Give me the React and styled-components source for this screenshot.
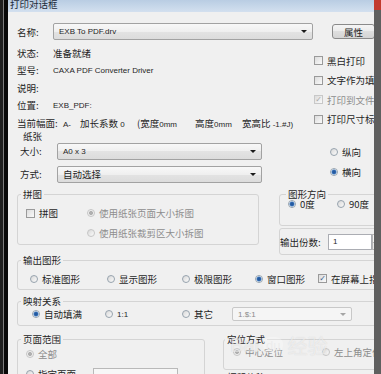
import React from 'react'
import styled, { createGlobalStyle } from 'styled-components'

const GlobalStyle = createGlobalStyle`
  html, body {
    margin: 0;
    padding: 0;
    background: #111;
  }
  body {
    font-family: "Noto Sans CJK SC", "Liberation Sans", sans-serif;
    font-size: 9.5px;
    color: #1f1f1f;
  }
`

function Radio({ checked, disabled, w, children }) {
  return (
    <Choice $w={w} $disabled={disabled}>
      <RadioDot $checked={checked} $disabled={disabled} />
      {children}
    </Choice>
  )
}

function Check({ checked, disabled, w, children }) {
  return (
    <Choice $w={w} $disabled={disabled}>
      <CheckBox $disabled={disabled}>{checked ? '✓' : ''}</CheckBox>
      {children}
    </Choice>
  )
}

function Combo({ w, h, disabled, latin, children }) {
  return (
    <ComboBox $w={w} $h={h} $disabled={disabled}>
      <Value $latin={latin}>{children}</Value>
      <Arrow $disabled={disabled} />
    </ComboBox>
  )
}

function App() {
  return (
    <>
      <GlobalStyle />
      <Screen>
        <LeftEdge />
        <Dialog>
          <TitleBar>打印对话框</TitleBar>
          <Body>
            <NameRow>
              <Label $w={36}>名称:</Label>
              <Combo w={260} latin>EXB To PDF.drv</Combo>
              <PushButton>属性</PushButton>
            </NameRow>

            <InfoArea>
              <InfoList>
                <InfoRow><Label $w={36}>状态:</Label>准备就绪</InfoRow>
                <InfoRow><Label $w={36}>型号:</Label><Value $latin>CAXA PDF Converter Driver</Value></InfoRow>
                <InfoRow><Label $w={36}>说明:</Label></InfoRow>
                <InfoRow><Label $w={36}>位置:</Label><Value $latin>EXB_PDF:</Value></InfoRow>
                <InfoRow>
                  <Label $w={46}>当前幅面:</Label>
                  <Label $w={17}><Value $latin>A-</Value></Label>
                  <Label $w={57}>加长系数 <Value $latin>0</Value></Label>
                  <Label $w={58}>(宽度<Value $latin>0mm</Value></Label>
                  <Label $w={47}>高度<Value $latin>0mm</Value></Label>
                  <Label>宽高比 <Value $latin>-1.#J)</Value></Label>
                </InfoRow>
              </InfoList>
              <CheckColumn>
                <Check>黑白打印</Check>
                <Check>文字作为填充</Check>
                <Check checked disabled>打印到文件</Check>
                <Check>打印尺寸标识</Check>
              </CheckColumn>
            </InfoArea>

            <PaperArea>
              <PaperFields>
                <PlainCaption>纸张</PlainCaption>
                <FieldRow>
                  <Label $w={37}>大小:</Label>
                  <Combo w={205} latin>A0 x 3</Combo>
                </FieldRow>
                <FieldRow>
                  <Label $w={37}>方式:</Label>
                  <Combo w={205}>自动选择</Combo>
                </FieldRow>
              </PaperFields>
              <OrientColumn>
                <Radio>纵向</Radio>
                <Radio checked>横向</Radio>
              </OrientColumn>
            </PaperArea>

            <MiddleArea>
              <Group $w={242} $legend={3}>
                <legend>拼图</legend>
                <TileContent>
                  <Check w={61}>拼图</Check>
                  <TileOptions>
                    <Radio checked disabled>使用纸张页面大小拆图</Radio>
                    <Radio disabled>使用纸张裁剪区大小拆图</Radio>
                  </TileOptions>
                </TileContent>
              </Group>
              <SideColumn>
                <Group $w={100} $legend={6} $pb={16}>
                  <legend>图形方向</legend>
                  <InlineRow $pl={8} $h={10}>
                    <Radio checked w={49}>0度</Radio>
                    <Radio>90度</Radio>
                  </InlineRow>
                </Group>
                <CopiesBox>
                  <Label $w={48}>输出份数:</Label>
                  <SpinInput>1</SpinInput>
                  <Spinner />
                </CopiesBox>
              </SideColumn>
            </MiddleArea>

            <Group $w={364} $legend={3} $pb={3}>
              <legend>输出图形</legend>
              <InlineRow $pl={12} $pt={6} $h={15}>
                <Radio w={77}>标准图形</Radio>
                <Radio w={75}>显示图形</Radio>
                <Radio w={73}>极限图形</Radio>
                <Radio checked w={63}>窗口图形</Radio>
                <Check checked>在屏幕上指定</Check>
              </InlineRow>
            </Group>

            <Group $w={364} $legend={3} $pb={3} $mt={6}>
              <legend>映射关系</legend>
              <InlineRow $pl={14} $h={16}>
                <Radio checked w={73}>自动填满</Radio>
                <Radio w={77}><Value $latin>1:1</Value></Radio>
                <Radio w={50}>其它</Radio>
                <Combo w={120} h={14} disabled latin>1.$:1</Combo>
              </InlineRow>
            </Group>

            <BottomArea>
              <Group $w={188} $legend={3}>
                <legend>页面范围</legend>
                <InlineRow $pl={8} $h={20}>
                  <Radio checked disabled>全部</Radio>
                </InlineRow>
                <InlineRow $pl={8} $h={20}>
                  <Radio w={67}>指定页面</Radio>
                  <TextInput />
                </InlineRow>
              </Group>
              <SideStack>
                <Group $w={152} $legend={1} $pb={9}>
                  <legend>定位方式</legend>
                  <InlineRow $pl={9} $h={16}>
                    <Radio checked disabled w={89}>中心定位</Radio>
                    <Radio disabled>左上角定位</Radio>
                  </InlineRow>
                </Group>
                <Group $w={152} $legend={1} $mt={2}>
                  <legend>打印偏移</legend>
                  <InlineRow $h={20} />
                </Group>
              </SideStack>
            </BottomArea>
          </Body>
          <Watermark>
            <span>Bai</span>
            <Paw>du</Paw>
            <span>经验</span>
          </Watermark>
        </Dialog>
        <RightEdge />
      </Screen>
    </>
  )
}

export default App

const Screen = styled.div`
  width: 381px;
  height: 374px;
  display: flex;
  overflow: hidden;
`

const LeftEdge = styled.div`
  width: 8px;
  flex: none;
  background: linear-gradient(to right, #1f1f1f 0 3px, #7c7c7c 3px 4px, #080808 4px);
`

const RightEdge = styled.div`
  width: 7px;
  flex: none;
  background: linear-gradient(#c23a2e 0 10px, #5f5f5f 10px);
`

const Dialog = styled.div`
  position: relative;
  flex: 1;
  display: flex;
  flex-direction: column;
  background: #f0f0f0;
  overflow: hidden;
  white-space: nowrap;
`

const TitleBar = styled.div`
  height: 12px;
  flex: none;
  padding-left: 2px;
  line-height: 8px;
  font-size: 9.5px;
  color: #1d2a3a;
  background: linear-gradient(#b9cde3, #d3e0ef);
  overflow: hidden;
`

const Body = styled.div`
  padding: 11px 0 0 9px;
  display: flex;
  flex-direction: column;
`

const NameRow = styled.div`
  display: flex;
  align-items: center;
  height: 17px;
`

const Label = styled.span`
  display: inline-block;
  flex: none;
  width: ${p => (p.$w ? `${p.$w}px` : 'auto')};
`

const Value = styled.span`
  font-family: ${p => (p.$latin ? '"Liberation Sans", sans-serif' : 'inherit')};
  font-size: ${p => (p.$latin ? '8px' : 'inherit')};
`

const ComboBox = styled.div`
  width: ${p => p.$w}px;
  height: ${p => p.$h || 17}px;
  flex: none;
  box-sizing: border-box;
  display: flex;
  align-items: center;
  padding: 0 5px 0 5px;
  border: 1px solid ${p => (p.$disabled ? '#c8c8c8' : '#a2a2a2')};
  border-radius: 2px;
  color: ${p => (p.$disabled ? '#8c8c8c' : '#1f1f1f')};
  background: ${p =>
    p.$disabled ? '#f5f5f5' : 'linear-gradient(#f8f8f8, #efefef 50%, #e3e3e3 50%, #dcdcdc)'};
`

const Arrow = styled.span`
  margin-left: auto;
  width: 0;
  height: 0;
  border-left: 3px solid transparent;
  border-right: 3px solid transparent;
  border-top: 3px solid ${p => (p.$disabled ? '#a5a5a5' : '#1a1a1a')};
`

const PushButton = styled.div`
  margin-left: 19px;
  width: 43px;
  height: 15px;
  flex: none;
  box-sizing: border-box;
  display: flex;
  align-items: center;
  justify-content: center;
  border: 1px solid #8a8a8a;
  border-radius: 3px;
  background: linear-gradient(#f5f5f5, #ebebeb 50%, #dedede 50%, #d4d4d4);
`

const InfoArea = styled.div`
  display: flex;
  margin-top: 4px;
`

const InfoList = styled.div`
  width: 297px;
  flex: none;
`

const InfoRow = styled.div`
  height: 17.5px;
  display: flex;
  align-items: center;
`

const CheckColumn = styled.div`
  padding-top: 7px;
  display: flex;
  flex-direction: column;
  & > * {
    height: 19.5px;
  }
`

const Choice = styled.div`
  display: flex;
  align-items: center;
  flex: none;
  width: ${p => (p.$w ? `${p.$w}px` : 'auto')};
  color: ${p => (p.$disabled ? '#8d8d8d' : '#1f1f1f')};
`

const RadioDot = styled.span`
  width: 8px;
  height: 8px;
  flex: none;
  box-sizing: border-box;
  margin-right: 4px;
  border-radius: 50%;
  border: 1px solid ${p => (p.$disabled ? '#c6c6c6' : '#97a3ae')};
  background: ${p =>
    p.$checked
      ? p.$disabled
        ? 'radial-gradient(circle, #b0b0b0 0 1.7px, #efefef 2.3px)'
        : 'radial-gradient(circle, #245aa0 0 1.4px, #5d93d4 2.3px, #e8eff7 2.8px)'
      : 'linear-gradient(135deg, #d8d8d8, #fbfbfb)'};
`

const CheckBox = styled.span`
  width: 9px;
  height: 9px;
  flex: none;
  box-sizing: border-box;
  margin-right: 4px;
  display: flex;
  align-items: center;
  justify-content: center;
  font-family: "DejaVu Sans", sans-serif;
  font-size: 8px;
  line-height: 1;
  color: ${p => (p.$disabled ? '#a8a8a8' : '#3b5f8f')};
  border: 1px solid ${p => (p.$disabled ? '#c8c8c8' : '#9a9a9a')};
  background: linear-gradient(135deg, #dcdcdc, #fafafa);
`

const PaperArea = styled.div`
  display: flex;
`

const PaperFields = styled.div`
  width: 313px;
  flex: none;
  display: flex;
  flex-direction: column;
  gap: 5px;
`

const PlainCaption = styled.div`
  height: 10.5px;
  line-height: 9px;
  padding-left: 6px;
  margin-bottom: -5px;
`

const FieldRow = styled.div`
  height: 18px;
  display: flex;
  align-items: center;
  padding-left: 3px;
`

const OrientColumn = styled.div`
  padding-top: 10.5px;
  display: flex;
  flex-direction: column;
  & > * {
    height: 20px;
  }
`

const MiddleArea = styled.div`
  display: flex;
  margin-top: 6px;
  align-items: flex-start;
`

const Group = styled.fieldset`
  width: ${p => p.$w}px;
  flex: none;
  box-sizing: border-box;
  margin: ${p => p.$mt || 0}px 0 0 0;
  padding: 0 0 ${p => p.$pb || 0}px 0;
  border: 1px solid #d4d4d4;
  border-radius: 3px;
  & > legend {
    margin-left: ${p => p.$legend}px;
    padding: 0 2px;
    line-height: 10px;
    font-size: 9.5px;
    color: #1f1f1f;
  }
`

const TileContent = styled.div`
  display: flex;
  padding: 4px 0 1px 8px;
  align-items: flex-start;
  & > *:first-child {
    height: 20px;
  }
`

const TileOptions = styled.div`
  display: flex;
  flex-direction: column;
  & > * {
    height: 20px;
  }
`

const SideColumn = styled.div`
  margin-left: 20px;
  display: flex;
  flex-direction: column;
`

const InlineRow = styled.div`
  display: flex;
  align-items: center;
  height: ${p => p.$h}px;
  padding-left: ${p => p.$pl || 0}px;
  padding-top: ${p => p.$pt || 0}px;
`

const CopiesBox = styled.div`
  margin-top: 2px;
  width: 100px;
  height: 27px;
  box-sizing: border-box;
  display: flex;
  align-items: center;
  border: 1px solid #d4d4d4;
  border-radius: 3px;
`

const SpinInput = styled.div`
  width: 44px;
  height: 16px;
  box-sizing: border-box;
  flex: none;
  padding-left: 4px;
  line-height: 14px;
  font-family: "Liberation Sans", sans-serif;
  font-size: 8px;
  border: 1px solid #abadb3;
  background: #fff;
`

const Spinner = styled.div`
  width: 6px;
  height: 16px;
  flex: none;
  box-sizing: border-box;
  border: 1px solid #b5b5b5;
  background: linear-gradient(#f4f4f4 0 7px, #b5b5b5 7px 8px, #e8e8e8 8px);
`

const BottomArea = styled.div`
  display: flex;
  margin-top: 8px;
  align-items: flex-start;
`

const SideStack = styled.div`
  margin-left: 18px;
  display: flex;
  flex-direction: column;
`

const TextInput = styled.div`
  width: 85px;
  height: 16px;
  margin-top: 4px;
  box-sizing: border-box;
  border: 1px solid #b9b9b9;
  background: #f7f7f7;
`

const Watermark = styled.div`
  position: absolute;
  left: 222px;
  top: 331px;
  display: flex;
  align-items: center;
  gap: 4px;
  font-family: "Liberation Sans", "Noto Sans CJK SC", sans-serif;
  font-size: 20px;
  color: rgba(255, 255, 255, 0.55);
  text-shadow: 0 0 1px rgba(120, 120, 120, 0.25);
  pointer-events: none;
`

const Paw = styled.span`
  display: inline-block;
  padding: 1px 3px;
  font-size: 13px;
  color: rgba(235, 235, 235, 0.85);
  background: rgba(255, 255, 255, 0.3);
  border-radius: 40% 40% 50% 50%;
  text-shadow: none;
`
